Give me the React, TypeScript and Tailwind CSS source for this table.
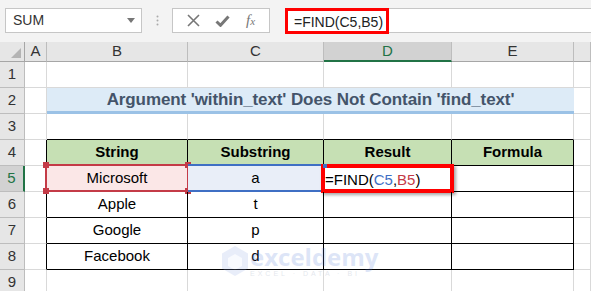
import React from 'react';

const cols = ['A', 'B', 'C', 'D', 'E', 'F'];

const rows = [
  { string: 'Microsoft', sub: 'a' },
  { string: 'Apple', sub: 't' },
  { string: 'Google', sub: 'p' },
  { string: 'Facebook', sub: 'd' },
];

const Handle: React.FC<{ pos: string }> = ({ pos }) => (
  <span className={`absolute w-[6px] h-[6px] bg-[#c43b47] ${pos}`} />
);

const RowHead: React.FC<{ n: number; active?: boolean }> = ({ n, active }) => (
  <div
    className={
      active
        ? 'flex items-center justify-center bg-[#d2d2d2] text-[#217346] border-b border-[#bdbdbd] border-r-2 border-r-[#217346] text-[15px]'
        : 'flex items-center justify-center bg-[#e6e6e6] text-[#333] border-b border-r border-[#bdbdbd] text-[15px]'
    }
  >
    {n}
  </div>
);

const Blank: React.FC<{ cls?: string }> = ({ cls }) => (
  <div className={cls ?? 'border-r border-b border-[#d9d9d9]'} />
);

export default function App() {
  return (
    <div className="relative w-[591px] h-[291px] overflow-hidden bg-white text-[14px] text-black" style={{ fontFamily: '"Liberation Sans", Arial, sans-serif' }}>
      {/* formula bar */}
      <div className="h-[42px] bg-[#f3f3f3] flex items-start pt-[8px] pl-[5px]">
        <div className="w-[137px] h-[25px] bg-white border border-[#c6c6c6] flex items-center justify-between pl-[7px] pr-[6px] text-[#333]">
          <span>SUM</span>
          <svg width="8" height="5" viewBox="0 0 8 5"><path d="M0 0h8L4 5z" fill="#777" /></svg>
        </div>
        <div className="w-[30px] h-[25px] flex items-center justify-center">
          <svg width="3" height="11" viewBox="0 0 3 11"><circle cx="1.5" cy="1.5" r="1" fill="#aaa" /><circle cx="1.5" cy="5.5" r="1" fill="#aaa" /><circle cx="1.5" cy="9.5" r="1" fill="#aaa" /></svg>
        </div>
        <div className="w-[98px] h-[25px] bg-white border border-[#c6c6c6] flex items-center justify-around px-[6px]">
          <svg width="13" height="13" viewBox="0 0 13 13"><path d="M1 1l11 11M12 1L1 12" stroke="#777" strokeWidth="1.6" /></svg>
          <svg width="15" height="12" viewBox="0 0 15 12"><path d="M1.5 6.5l4 3.8L13.5 1.5" stroke="#777" strokeWidth="3" fill="none" /></svg>
          <span className="italic text-[#777] text-[15px]" style={{ fontFamily: '"Liberation Serif", serif' }}>f<span className="text-[11px]">x</span></span>
        </div>
        <div className="flex-1 h-[25px] ml-[16px] bg-white border-y border-l border-[#c6c6c6] relative">
          <div className="absolute left-[-2px] top-[-1px] w-[104px] h-[26px] border-[3px] border-[#ff0000]" />
          <span className="absolute left-[7px] top-[3px] text-[14px] text-[#222]">=FIND(C5,B5)</span>
        </div>
      </div>

      <div className="grid grid-cols-[25px_22px_141px_136px_128px_122px_1fr] grid-rows-[20px_26px_26px_26px_26px_26px_26px_26px_26px_26px]">
        {/* column header row */}
        <div className="bg-[#e6e6e6] border-b border-r border-[#a6a6a6] relative">
          <svg className="absolute right-[3px] bottom-[3px]" width="10" height="10" viewBox="0 0 10 10"><path d="M10 0V10H0z" fill="#b4b4b4" /></svg>
        </div>
        {cols.map((c) =>
          c === 'D' ? (
            <div key={c} className="bg-[#d2d2d2] text-[#217346] border-r border-[#bdbdbd] border-b-2 border-b-[#217346] flex items-center justify-center text-[15px]">{c}</div>
          ) : (
            <div key={c} className="bg-[#e6e6e6] text-[#333] border-r border-[#bdbdbd] border-b border-b-[#a6a6a6] flex items-center justify-center text-[15px]">{c === 'F' ? '' : c}</div>
          )
        )}

        {/* row 1 */}
        <RowHead n={1} />
        <Blank /><Blank /><Blank /><Blank /><Blank /><Blank />

        {/* row 2 title */}
        <RowHead n={2} />
        <Blank />
        <div className="col-span-4 bg-[#ddebf7] border-b-[3px] border-[#9bc2e6] flex items-center justify-center font-bold text-[#44546a] text-[17px] tracking-[-0.1px]">
          Argument 'within_text' Does Not Contain 'find_text'
        </div>
        <Blank />

        {/* row 3 */}
        <RowHead n={3} />
        <Blank />
        <Blank cls="border-r border-[#d9d9d9] border-b border-b-black" />
        <Blank cls="border-r border-[#d9d9d9] border-b border-b-black" />
        <Blank cls="border-r border-[#d9d9d9] border-b border-b-black" />
        <Blank cls="border-r border-[#d9d9d9] border-b border-b-black" />
        <Blank />

        {/* row 4 header */}
        <RowHead n={4} />
        <Blank cls="border-b border-[#d9d9d9] border-r border-r-black" />
        {['String', 'Substring', 'Result', 'Formula'].map((h) => (
          <div key={h} className="bg-[#c6e0b4] border-r border-b border-black flex items-center justify-center font-bold text-[15px]">{h}</div>
        ))}
        <Blank />

        {/* data rows */}
        {rows.map((r, i) => {
          const n = i + 5;
          const first = i === 0;
          return (
            <React.Fragment key={n}>
              <RowHead n={n} active={first} />
              <Blank cls="border-b border-[#d9d9d9] border-r border-r-black" />
              <div className={`${first ? 'bg-[#fbe7e7]' : ''} border-r border-b border-black flex items-center justify-center relative text-[15px]`}>
                {first && (
                  <>
                    <div className="absolute left-[-2px] top-[-2px] right-[-2px] bottom-[-1px] border-2 border-[#c43b47]" />
                    <Handle pos="left-[-4px] top-[-4px]" />
                    <Handle pos="right-[-4px] top-[-4px]" />
                    <Handle pos="left-[-4px] bottom-[-3px]" />
                    <Handle pos="right-[-4px] bottom-[-3px]" />
                  </>
                )}
                <span className="relative">{r.string}</span>
              </div>
              <div className={`${first ? 'bg-[#e9eef8]' : ''} border-r border-b border-black flex items-center justify-center relative text-[15px]`}>
                {first && <div className="absolute left-0 top-[-2px] right-[-1px] bottom-[-1px] border-y-2 border-[#3f6fc4]" />}
                <span className="relative">{r.sub}</span>
              </div>
              <div className="border-r border-b border-black relative">
                {first && (
                  <>
                    <div className="absolute left-[-3px] top-[-2px] w-[133px] h-[29px] border-[4px] border-[#ff0000] shadow-[2px_2px_3px_rgba(0,0,0,0.35)]" />
                    <span className="absolute left-[-1px] top-[-2px] w-[4px] h-[4px] bg-[#3f6fc4]" />
                    <span className="absolute left-[1px] top-[3px] text-[15px]">
                      =FIND(<span className="text-[#3f6fc4]">C5</span>,<span className="text-[#c43b47]">B5</span>)
                    </span>
                  </>
                )}
              </div>
              <div className="border-r border-b border-black" />
              <Blank />
            </React.Fragment>
          );
        })}

        {/* row 9 */}
        <RowHead n={9} />
        <Blank /><Blank /><Blank /><Blank /><Blank /><Blank />
      </div>

      {/* watermark */}
      <div className="absolute left-[222px] top-[245px] flex items-center gap-[2px] opacity-20 pointer-events-none">
        <svg width="26" height="30" viewBox="0 0 26 30">
          <path d="M13 0L26 7.5V22.5L13 30L0 22.5V7.5z" fill="#8fa7e6" />
          <path d="M13 8L20 12V20L13 24L6 20V12z" fill="#dfe7fb" />
        </svg>
        <div className="flex flex-col leading-none">
          <span className="text-[#5b7fd8] font-bold text-[24px]" style={{ fontFamily: '"Open Sans", sans-serif' }}>exceldemy</span>
          <span className="text-[#7a8aa8] text-[7px] tracking-[3px] mt-[1px]">EXCEL · DATA · BI</span>
        </div>
      </div>
    </div>
  );
}
